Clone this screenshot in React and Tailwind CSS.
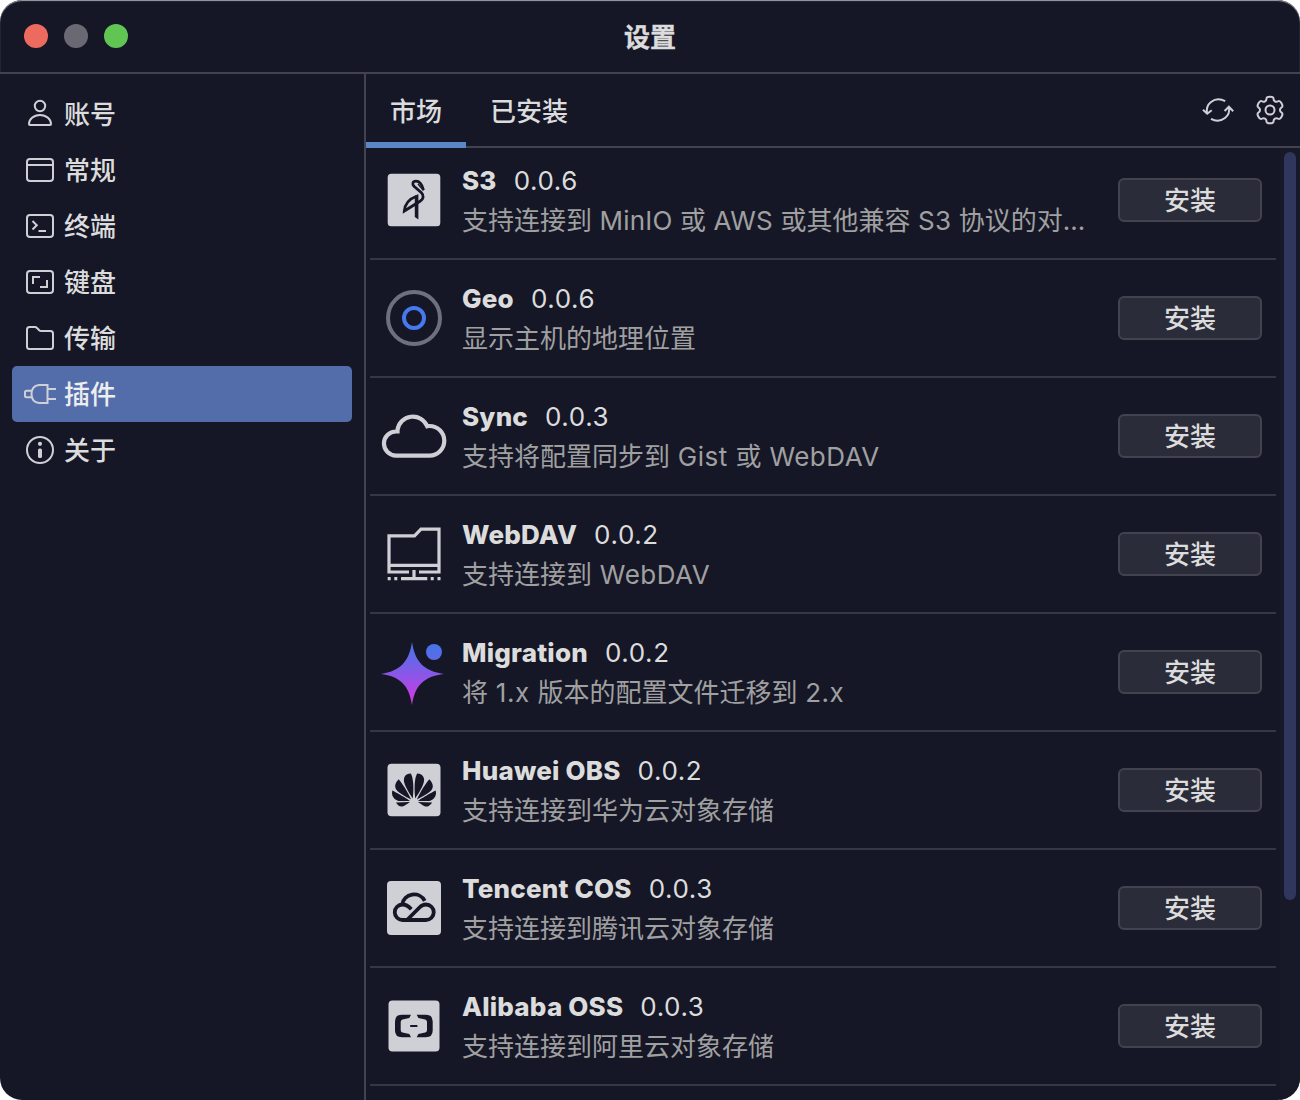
import React from "react";
import { SiHuawei } from "react-icons/si";

const INK = "#151727";
const LIGHT = "#cfd0d6";

function SideIcon({ children }) {
  return (
    <svg className="size-8 shrink-0" viewBox="0 0 32 32" fill="none" stroke="#ced0d6" strokeWidth="2">
      {children}
    </svg>
  );
}

const frame = <rect x="3" y="5" width="26" height="22" rx="3" />;

const sections = [
  {
    label: "账号",
    icon: (
      <>
        <circle cx="16" cy="8" r="5.2" />
        <path d="M16 17C9.5 17 5 21.5 5 26Q5 27 6 27H26Q27 27 27 26C27 21.5 22.500 17 16 17Z" />
      </>
    ),
  },
  { label: "常规", icon: <>{frame}<path d="M3 11H29" /></> },
  { label: "终端", icon: <>{frame}<path d="M8.500 11L12.800 15.200L8.500 19.500M14.500 21H22" /></> },
  { label: "键盘", icon: <>{frame}<path d="M9 18V11H16M16 21H23V14" /></> },
  {
    label: "传输",
    icon: <path d="M3 7.500Q3 5 5.500 5H11Q12 5 13 6L15.500 8.500Q16 9 17 9H26.500Q29 9 29 11.500V24.500Q29 27 26.500 27H5.500Q3 27 3 24.500Z" />,
  },
  {
    label: "插件",
    active: true,
    icon: (
      <path d="M23.500 7H15Q7.500 8 7.500 16Q7.500 24 15 25H23.500ZM7.500 12.700H2.500Q1 12.700 1 14.200V17.800Q1 19.300 2.500 19.300H7.500M23.500 11H32M23.500 21H32" />
    ),
  },
  {
    label: "关于",
    icon: (
      <>
        <circle cx="16" cy="16" r="13" />
        <circle cx="16" cy="9.800" r="2.100" fill="#ced0d6" stroke="none" />
        <rect x="14" y="14.500" width="4" height="9.500" rx="1.500" fill="#ced0d6" stroke="none" />
      </>
    ),
  },
];

function gearPath() {
  const points = [];
  for (let i = 0; i < 6; i++) {
    [[-15, 13.8], [15, 13.8], [20, 10.1], [40, 10.1]].forEach(([a, r]) => {
      const t = ((i * 60 + a - 90) * Math.PI) / 180;
      points.push([16 + r * Math.cos(t), 16 + r * Math.sin(t)]);
    });
  }
  const mid = (p, q) => `${((p[0] + q[0]) / 2).toFixed(2)} ${((p[1] + q[1]) / 2).toFixed(2)}`;
  const n = points.length;
  let d = `M${mid(points[n - 1], points[0])}`;
  points.forEach((p, i) => {
    d += `Q${p[0].toFixed(2)} ${p[1].toFixed(2)} ${mid(p, points[(i + 1) % n])}`;
  });
  return d + "Z";
}

const plugins = [
  {
    name: "S3",
    version: "0.0.6",
    text: "支持连接到 MinIO 或 AWS 或其他兼容 S3 协议的对…",
    icon: (
      <>
        <rect x="5.700" y="5.700" width="52.600" height="52.600" rx="3.500" fill={LIGHT} />
        <g fill="none" stroke={INK} strokeWidth="2.800">
          <path d="M41.500 22C40 16.500 37.500 13.200 34 13.200C30.500 13.200 30 16 32 18.300L39.200 24.500C42.300 27.500 41.600 31 38 33.300L22.300 43C22.800 36.500 27 31 34.500 28.200" />
          <path d="M36 16L41.500 22.500" strokeWidth="1.200" />
        </g>
        <path d="M32.800 28L36.400 26V51.500L32.800 49Z" fill={INK} />
      </>
    ),
  },
  {
    name: "Geo",
    version: "0.0.6",
    text: "显示主机的地理位置",
    icon: (
      <g fill="none" strokeWidth="4">
        <circle cx="32" cy="32" r="26" stroke="#6f707e" />
        <circle cx="32" cy="32" r="10" stroke="#4778ee" />
      </g>
    ),
  },
  {
    name: "Sync",
    version: "0.0.3",
    text: "支持将配置同步到 Gist 或 WebDAV",
    icon: (
      <path
        d="M15.500 27.500H14A12.050 12.050 0 0 0 14 51.600H47.500A14.800 14.800 0 0 0 47.500 22Q46.200 22 45.200 22.300A15.500 15.500 0 0 0 15.500 26V29.500"
        fill="none"
        stroke={LIGHT}
        strokeWidth="4.200"
      />
    ),
  },
  {
    name: "WebDAV",
    version: "0.0.2",
    text: "支持连接到 WebDAV",
    icon: (
      <g fill="none" stroke={LIGHT} strokeWidth="3.200">
        <path d="M27 50H7V13.800H32.500L39 7.200H57V50H37M7 43.300H57M32 48V57M19 56.700H45.300M5.700 56.700H8.700M12.300 56.700H15.300M48.700 56.700H51.700M55.500 56.700H58.500" />
      </g>
    ),
  },
  {
    name: "Migration",
    version: "0.0.2",
    text: "将 1.x 版本的配置文件迁移到 2.x",
    icon: (
      <>
        <defs>
          <linearGradient id="spark" x1="0" y1="0" x2="0" y2="1">
            <stop offset="0" stopColor="#4376e8" />
            <stop offset="0.500" stopColor="#8758e8" />
            <stop offset="1" stopColor="#dc35e2" />
          </linearGradient>
          <linearGradient id="dot" x1="0" y1="0" x2="0" y2="1">
            <stop offset="0" stopColor="#4573e8" />
            <stop offset="1" stopColor="#5e69e9" />
          </linearGradient>
        </defs>
        <path
          d="M30 2C33 22 42 31 62 34C42 36.500 33 45 30 65C27 45 18 36.500 -1 34C18 31 27 22 30 2Z"
          fill="url(#spark)"
        />
        <circle cx="52" cy="12" r="8" fill="url(#dot)" />
      </>
    ),
  },
  {
    name: "Huawei OBS",
    version: "0.0.2",
    text: "支持连接到华为云对象存储",
    icon: (
      <>
        <rect x="5.500" y="5.700" width="53" height="52.600" rx="4" fill={LIGHT} />
        <SiHuawei x="10" y="10" size={44} color={INK} />
      </>
    ),
  },
  {
    name: "Tencent COS",
    version: "0.0.3",
    text: "支持连接到腾讯云对象存储",
    icon: (
      <>
        <rect x="5" y="5" width="54" height="54" rx="4" fill={LIGHT} />
        <g fill="none" stroke={INK} strokeWidth="3.800">
          <path d="M24.500 44.500L37.500 31.500Q40.500 28.500 44 28.500A7.750 7.750 0 0 1 44 44H20.500A7.750 7.750 0 0 1 20.500 28.500Q25 28.500 29.300 33.300" />
          <path d="M20.200 28.500A12 12 0 0 1 42.700 24.800" />
        </g>
      </>
    ),
  },
  {
    name: "Alibaba OSS",
    version: "0.0.3",
    text: "支持连接到阿里云对象存储",
    icon: (
      <>
        <rect x="6.500" y="6.500" width="51" height="51" rx="4" fill={LIGHT} />
        <g fill={INK}>
          <path d="M29 20.700H20Q13 20.700 13 27.500V36.500Q13 43.300 20 43.300H29L27.300 40L20.500 38.500Q18.700 38 18.700 36V28Q18.700 26 20.500 25.500L27.300 24Z" />
          <path d="M34.700 20.700H43.700Q50.700 20.700 50.700 27.500V36.500Q50.700 43.300 43.700 43.300H34.700L36.400 40L43.200 38.500Q45 38 45 36V28Q45 26 43.200 25.500L36.400 24Z" />
          <rect x="28.200" y="31" width="7.200" height="2" />
        </g>
      </>
    ),
  },
];

// Latin runs are set slightly looser than the Chinese text around them.
function Mixed({ text }) {
  const tracking = text.length > 30 ? "tracking-[0.2px]" : "tracking-[0.5px]";
  return text.split(/([\x20-\x7e]+)/).map((run, i) =>
    i % 2 ? (
      <span key={i} className={tracking}>
        {run}
      </span>
    ) : (
      run
    )
  );
}

export default function App() {
  return (
    <div className="h-[1100px] w-[1300px] overflow-hidden bg-white">
      <div className="flex h-full flex-col overflow-hidden rounded-[22px] bg-[#151727] font-['Inter','Noto_Sans_CJK_SC',sans-serif] text-[26px] text-[#dcdcdc]">
        <header className="grid h-[74px] shrink-0 grid-cols-[1fr_auto_1fr] items-center rounded-t-[22px] border-b-2 border-[#42434f] px-6 shadow-[inset_0_1px_1px_#a0a2aa]">
          <div className="flex gap-4">
            <span className="size-6 rounded-full bg-[#ed6a5e]" />
            <span className="size-6 rounded-full bg-[#6a6973]" />
            <span className="size-6 rounded-full bg-[#61c554]" />
          </div>
          <h1 className="pt-[3px] font-bold leading-10 [-webkit-text-stroke:0.4px_#dcdcdc]">设置</h1>
        </header>

        <div className="flex min-h-0 flex-1">
          <nav className="w-[366px] shrink-0 border-r-2 border-[#42434f] p-3">
            {sections.map((s) => (
              <div
                key={s.label}
                className={
                  s.active
                    ? "flex h-14 items-center gap-2 rounded-[5px] bg-[#536dab] px-3 font-medium text-[#eeeeee]"
                    : "flex h-14 items-center gap-2 px-3 font-medium"
                }
              >
                <SideIcon>{s.icon}</SideIcon>
                <span className="pt-0.5 leading-10">{s.label}</span>
              </div>
            ))}
          </nav>

          <main className="flex min-w-0 flex-1 flex-col">
            <div className="flex h-[74px] shrink-0 justify-between border-b-2 border-[#42434f] font-medium">
              <div className="-mb-0.5 flex">
                <div className="flex w-[100px] items-center justify-center border-b-[6px] border-[#5a88c6] pt-1.5">市场</div>
                <div className="flex items-center px-6">已安装</div>
              </div>
              <div className="flex items-center gap-5 pr-3.5">
                <SideIcon>
                  <path d="M5 19.500Q3.800 12 9 8Q15.500 3 23.200 7.200M1 15.700L5.200 19.700L9.700 16.200M27 13Q28.200 20 23 24Q16.500 29 9 24.800M22.600 17L26.900 12.700L31.200 17.200" />
                </SideIcon>
                <SideIcon>
                  <path d={gearPath()} />
                  <circle cx="16" cy="16" r="4.500" />
                </SideIcon>
              </div>
            </div>

            <div className="flex min-h-0 flex-1 justify-between overflow-hidden">
              <div className="-mt-1.5 ml-1 w-[906px]">
                {plugins.map((p) => (
                  <div key={p.name} className="flex h-[118px] items-center border-b-2 border-[#363743] pl-3 pr-3.5">
                    <svg className="size-16 shrink-0 overflow-visible" viewBox="0 0 64 64">
                      {p.icon}
                    </svg>
                    <div className="ml-4 w-[630px] whitespace-nowrap pt-0.5 leading-10">
                      <div className="flex gap-[17px]">
                        <span className="font-extrabold tracking-[0.2px]">{p.name}</span>
                        <span className="tracking-[0.6px]">{p.version}</span>
                      </div>
                      <div className="text-[#a0a0a0]">
                        <Mixed text={p.text} />
                      </div>
                    </div>
                    <div className="ml-auto flex h-11 w-36 items-center justify-center rounded-md border-2 border-[#42434f] bg-[#2b2c3a] font-medium">
                      <span className="-mb-0.5 leading-10">安装</span>
                    </div>
                  </div>
                ))}
              </div>
              <div className="w-5 bg-[#171828] p-1">
                <div className="h-[748px] w-3 rounded-full bg-[#31365c]" />
              </div>
            </div>
          </main>
        </div>
      </div>
    </div>
  );
}
